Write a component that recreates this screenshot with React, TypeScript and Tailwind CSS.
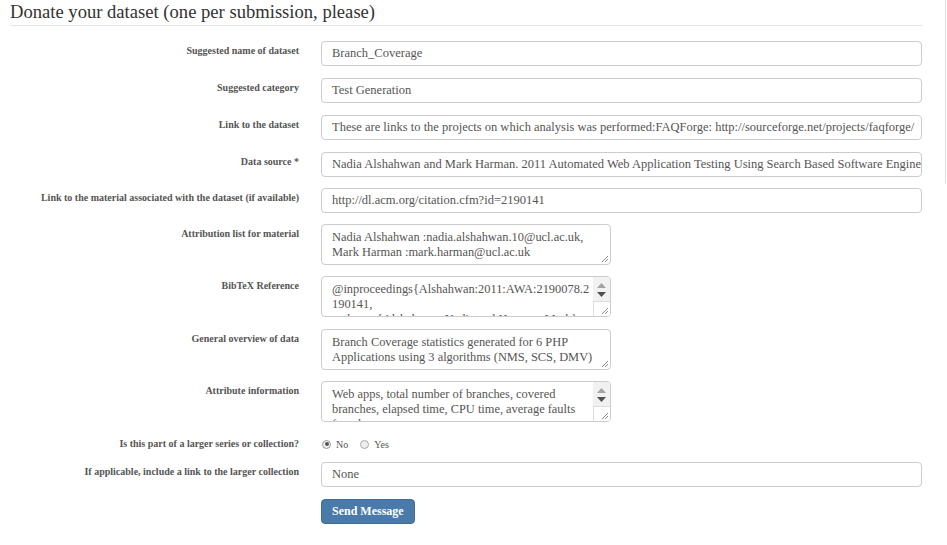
import { ReactNode } from 'react';

const serif = { fontFamily: '"Liberation Serif", "DejaVu Serif", serif' };

interface RowProps {
  label: string;
  children: ReactNode;
  className?: string;
}

function Row({ label, children, className }: RowProps) {
  return (
    <div className={'flex items-start ' + (className ?? '')}>
      <label className="w-[289px] shrink-0 pt-[3px] text-right text-[10px] font-bold leading-[14px] text-[#555]">
        {label}
      </label>
      <div className="ml-[22px] flex-1">{children}</div>
    </div>
  );
}

function TextInput({ value }: { value: string }) {
  return (
    <div className="h-[25px] w-[601px] overflow-hidden whitespace-nowrap rounded-[4px] border border-[#ccc] bg-white pl-[10px] pr-2 text-[12.5px] leading-[23px] text-[#555]">
      {value}
    </div>
  );
}

function Grip() {
  return (
    <svg className="absolute bottom-[1px] right-[1px]" width="8" height="8" viewBox="0 0 8 8">
      <path d="M7 1 L1 7 M7 4 L4 7" stroke="#888" strokeWidth="1" />
    </svg>
  );
}

function TextArea({ lines, scroll }: { lines: string[]; scroll?: boolean }) {
  return (
    <div className="relative h-[41px] w-[290px] overflow-hidden rounded-[4px] border border-[#ccc] bg-white">
      <div className="pl-[10px] pr-5 pt-[5px] text-[12.4px] leading-[15px] text-[#555]">
        {lines.map((l, i) => (
          <div key={i} className="whitespace-nowrap">
            {l}
          </div>
        ))}
      </div>
      {scroll && (
        <div className="absolute right-0 top-0 flex h-full w-[17px] flex-col bg-[#f1f1f1]">
          <div className="flex flex-col items-center pt-[6px]">
            <svg width="9" height="5" viewBox="0 0 9 5">
              <path d="M0 5 L4.5 0 L9 5 Z" fill="#a3a3a3" />
            </svg>
            <svg className="mt-[4px]" width="9" height="5" viewBox="0 0 9 5">
              <path d="M0 0 L4.5 5 L9 0 Z" fill="#505050" />
            </svg>
          </div>
          <div className="mt-auto h-[15px] border-l border-t border-[#ddd] bg-white" />
        </div>
      )}
      <Grip />
    </div>
  );
}

export default function App() {
  return (
    <div className="flex min-h-[545px] w-[947px] bg-white" style={serif}>
      <div className="w-[945px] shrink-0 pl-[10px] pr-[23px]">
        <h2 className="pt-[1px] text-[18.6px] leading-[22px] text-[#333]">
          Donate your dataset (one per submission, please)
        </h2>
        <div className="mt-[2px] border-t border-[#e5e5e5]" />

        <form className="mt-[15px] flex flex-col">
          <Row label="Suggested name of dataset">
            <TextInput value="Branch_Coverage" />
          </Row>
          <Row className="mt-[12px]" label="Suggested category">
            <TextInput value="Test Generation" />
          </Row>
          <Row className="mt-[12px]" label="Link to the dataset">
            <TextInput value="These are links to the projects on which analysis was performed:FAQForge: http://sourceforge.net/projects/faqforge/" />
          </Row>
          <Row className="mt-[12px]" label="Data source *">
            <TextInput value="Nadia Alshahwan and Mark Harman. 2011 Automated Web Application Testing Using Search Based Software Engineering" />
          </Row>
          <Row className="mt-[11px]" label="Link to the material associated with the dataset (if available)">
            <TextInput value="http://dl.acm.org/citation.cfm?id=2190141" />
          </Row>
          <Row className="mt-[11px]" label="Attribution list for material">
            <TextArea lines={['Nadia Alshahwan :nadia.alshahwan.10@ucl.ac.uk,', 'Mark Harman :mark.harman@ucl.ac.uk']} />
          </Row>
          <Row className="mt-[11px]" label="BibTeX Reference">
            <TextArea
              scroll
              lines={['@inproceedings{Alshahwan:2011:AWA:2190078.2', '190141,', ' author = {Alshahwan, Nadia and Harman, Mark},']}
            />
          </Row>
          <Row className="mt-[12px]" label="General overview of data">
            <TextArea lines={['Branch Coverage statistics generated for 6 PHP', 'Applications using 3 algorithms (NMS, SCS, DMV)']} />
          </Row>
          <Row className="mt-[11px]" label="Attribute information">
            <TextArea
              scroll
              lines={['Web apps, total number of branches,  covered', 'branches, elapsed time, CPU time, average faults', 'found']}
            />
          </Row>
          <div className="mt-[12px] flex h-[20px] items-center">
            <label className="w-[289px] shrink-0 text-right text-[10px] font-bold leading-[14px] text-[#555]">
              Is this part of a larger series or collection?
            </label>
            <div className="ml-[22px] flex items-center text-[10px] text-[#555]">
              <span className="ml-[1px] flex h-[9px] w-[9px] items-center justify-center rounded-full border border-[#999] bg-[#f3f3f3]">
                <span className="h-[4px] w-[4px] rounded-full bg-[#555]" />
              </span>
              <span className="ml-[5px]">No</span>
              <span className="ml-[12px] h-[9px] w-[9px] rounded-full border border-[#aaa] bg-[#eee]" />
              <span className="ml-[5px]">Yes</span>
            </div>
          </div>
          <Row className="mt-[8px]" label="If applicable, include a link to the larger collection">
            <TextInput value="None" />
          </Row>
          <div className="ml-[311px] mt-[11px]">
            <button
              type="button"
              className="h-[25px] rounded-[4px] border border-[#3f6c97] bg-[#4a7aaa] px-[10px] text-[12px] font-bold leading-[23px] text-white"
            >
              Send Message
            </button>
          </div>
        </form>
      </div>
      <div className="h-[183px] w-[2px] border-l border-[#ddd]" />
    </div>
  );
}
